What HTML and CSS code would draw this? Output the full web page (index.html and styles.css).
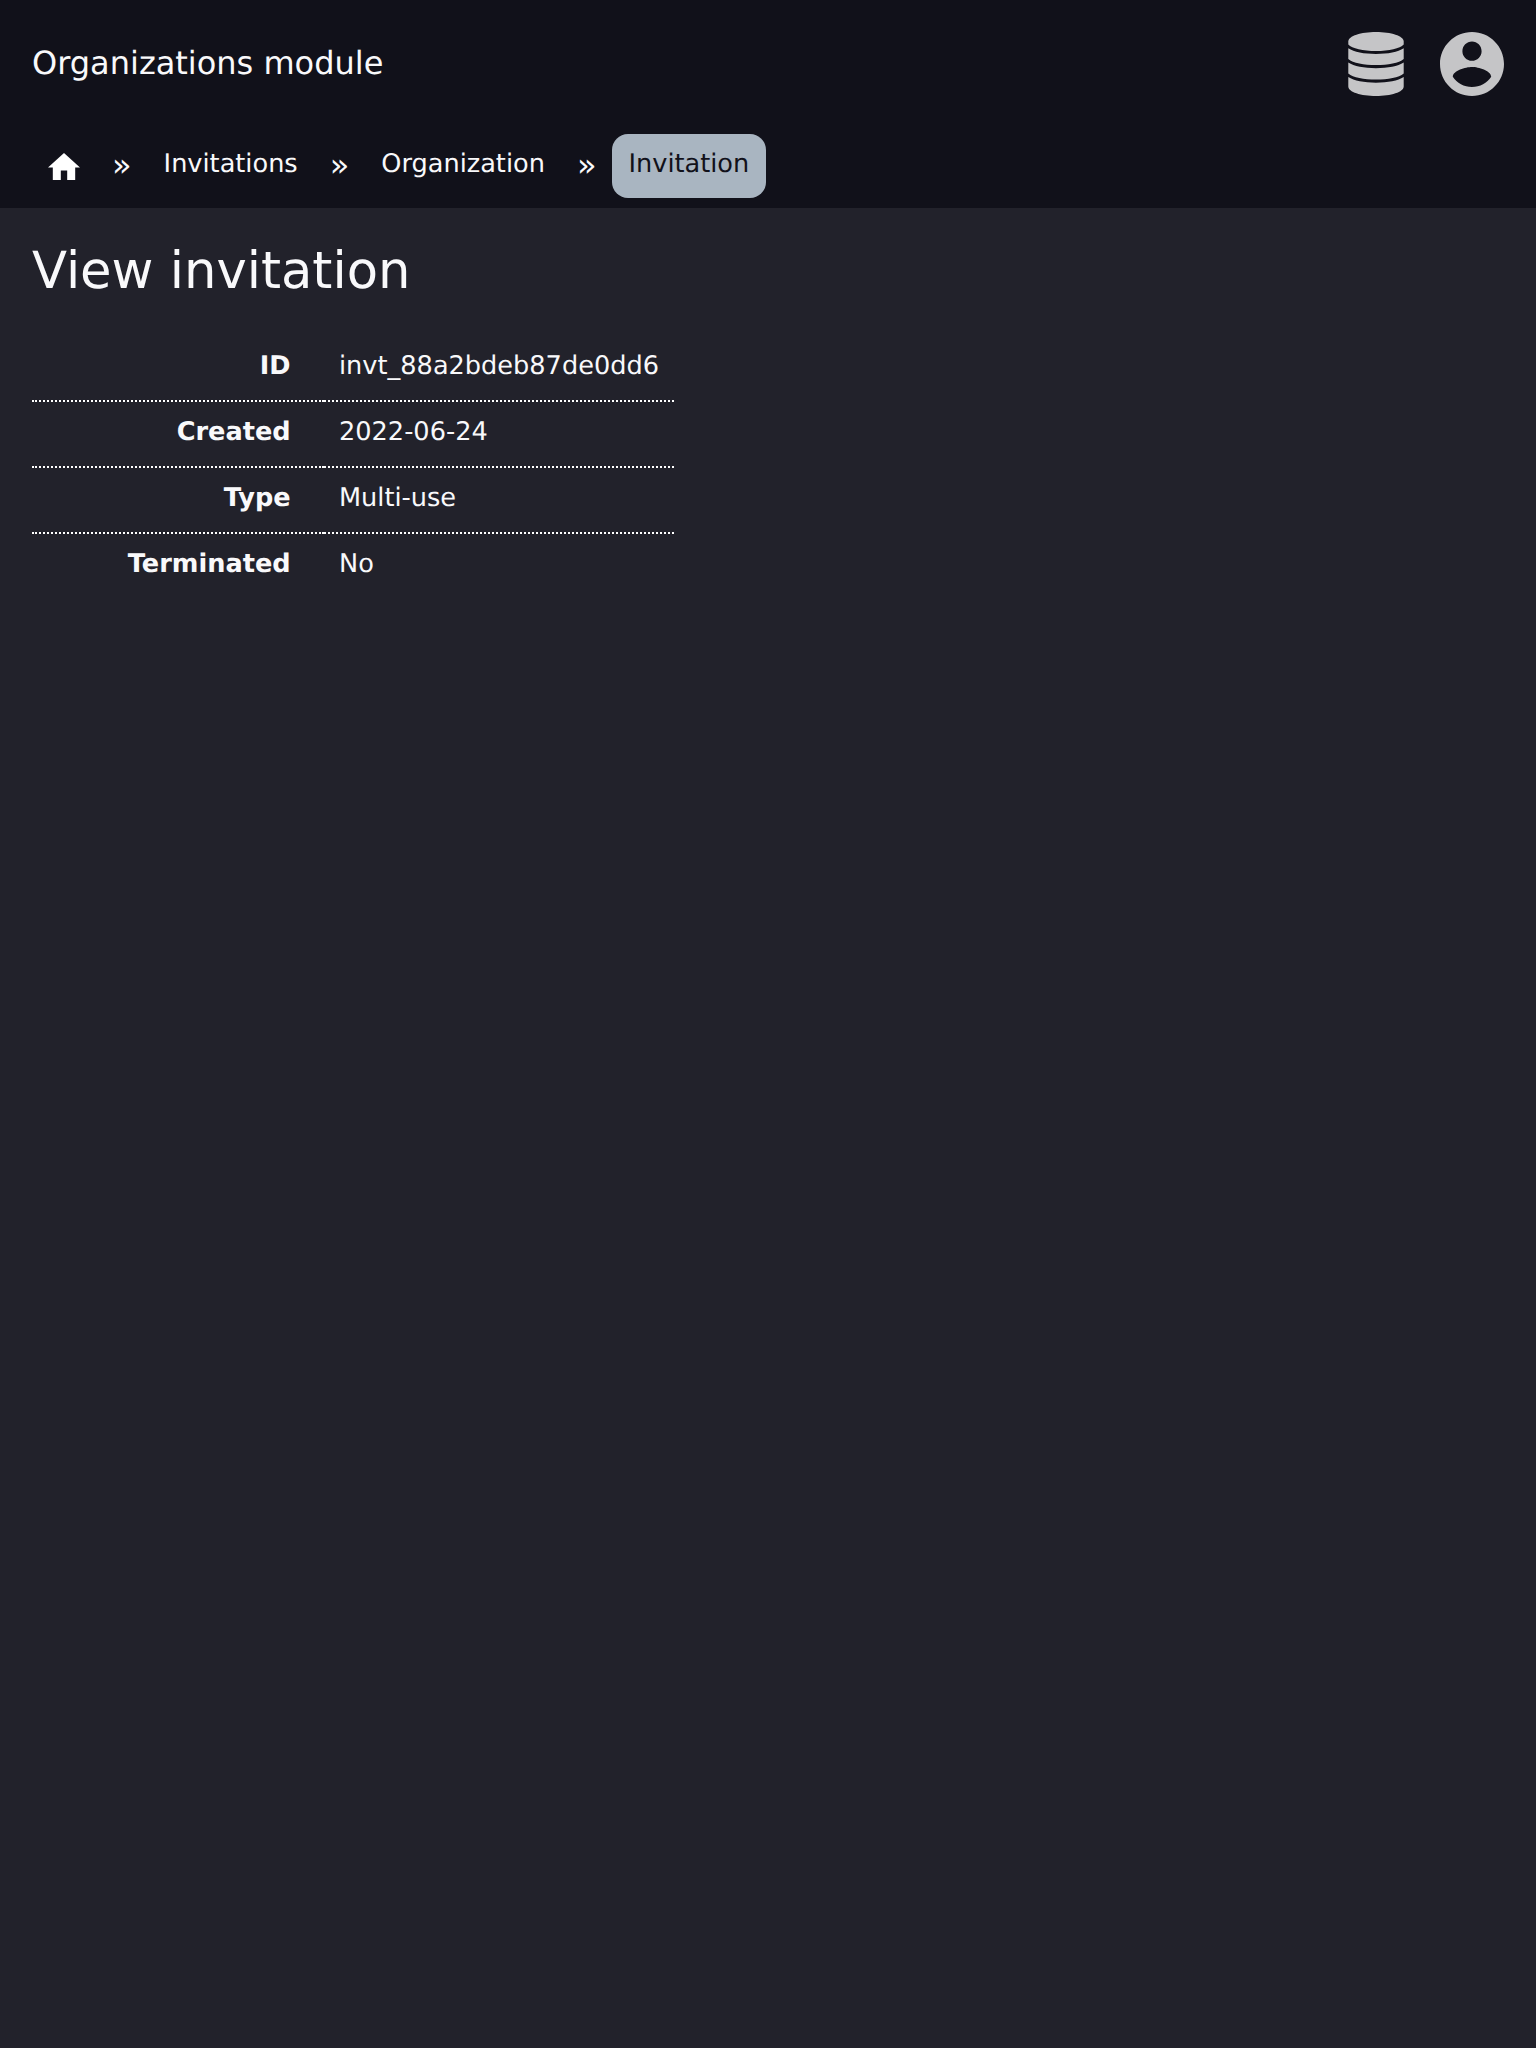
FILE: index.html
```html
<!DOCTYPE html>
<html lang="en">
<head>
<meta charset="utf-8">
<title>View invitation</title>
<link rel="stylesheet" href="styles.css">
</head>
<body>
<header class="header">
  <div class="topbar">
    <span class="module">Organizations module</span>
    <div class="actions">
      <svg class="database" viewBox="0 0 56 64" aria-hidden="true">
        <path d="M28 0C43 0 55.700 4 55.700 9.500v3C52 16.500 41 19 28 19S4 16.500 .3 12.500v-3C.3 4 13 0 28 0z"/>
        <path d="M.3 16.300C6 20 16 22 28 22s22-2 27.700-5.700V27C51 31 40 33 28 33S5 31 .3 27z"/>
        <path d="M.3 30.600C6 34.300 16 36.300 28 36.300s22-2 27.700-5.700V41.500C51 45.500 40 47.500 28 47.500S5 45.500 .3 41.500z"/>
        <path d="M.3 45C6 48.700 16 50.700 28 50.700s22-2 27.700-5.700v9.500C55.700 60 43 64 28 64S.3 60 .3 54.500z"/>
      </svg>
      <svg class="account" viewBox="2 2 20 20" aria-hidden="true">
        <path d="M12 2C6.480 2 2 6.480 2 12s4.480 10 10 10 10-4.480 10-10S17.520 2 12 2zm0 3c1.660 0 3 1.340 3 3s-1.340 3-3 3-3-1.340-3-3 1.340-3 3-3zm0 14.200c-2.500 0-4.710-1.280-6-3.220.030-1.990 4-3.080 6-3.080 1.990 0 5.970 1.090 6 3.080-1.290 1.940-3.500 3.220-6 3.220z"/>
      </svg>
    </div>
  </div>
  <nav class="breadcrumbs">
    <a class="crumb"><svg class="home" viewBox="2 3 20 17" aria-hidden="true"><path d="M10 20v-6h4v6h5v-8h3L12 3 2 12h3v8z"/></svg></a>
    <span class="separator">»</span>
    <a class="crumb">Invitations</a>
    <span class="separator">»</span>
    <a class="crumb">Organization</a>
    <span class="separator">»</span>
    <a class="crumb current">Invitation</a>
  </nav>
</header>
<main class="content">
  <h1 class="title">View invitation</h1>
  <table class="details">
    <tr><th>ID</th><td>invt_88a2bdeb87de0dd6</td></tr>
    <tr><th>Created</th><td>2022-06-24</td></tr>
    <tr><th>Type</th><td>Multi-use</td></tr>
    <tr><th>Terminated</th><td>No</td></tr>
  </table>
</main>
</body>
</html>
```
FILE: styles.css
```css
* { box-sizing: border-box; }
body {
  margin: 0;
  min-height: 100vh;
  background: #22222b;
  color: #f9f9fb;
  font: 25.6px/32px "DejaVu Sans", sans-serif;
  text-rendering: geometricPrecision;
}
.header { height: 208px; background: #11111a; }
.topbar {
  display: flex;
  justify-content: space-between;
  align-items: center;
  height: 128px;
  padding: 0 32px;
}
.module { font-size: 32px; line-height: 40px; padding-bottom: 2px; }
.actions { display: flex; gap: 36px; }
.database { width: 56px; height: 64px; fill: #c5c5c7; }
.account { width: 64px; height: 64px; fill: #c5c5c7; }
.breadcrumbs { display: flex; padding: 6px 32px 0; }
.crumb {
  height: 64px;
  padding: 14px 16px 0;
  border-radius: 16px;
}
.home { display: block; width: 32px; height: 27.2px; margin-top: 5px; fill: #fff; }
.separator { padding: 11px 16px 0; font-size: 32px; line-height: 40px; }
.current { padding-right: 16.6px; background: #a9b5c1; color: #11111a; }
.content { padding: 32px; }
.title { margin: 0; padding-top: 1px; font-size: 51.2px; line-height: 60px; font-weight: 400; }
.details { width: 642px; margin-top: 35px; border-spacing: 0; table-layout: fixed; }
.details th, .details td {
  height: 66px;
  padding: 14px 0 18px 15px;
  border-bottom: 2px dotted #fff;
  text-align: left;
  vertical-align: top;
}
.details th { width: 292px; padding-right: 33.4px; text-align: right; }
.details tr:last-child > * { border-bottom: 0; }
```
